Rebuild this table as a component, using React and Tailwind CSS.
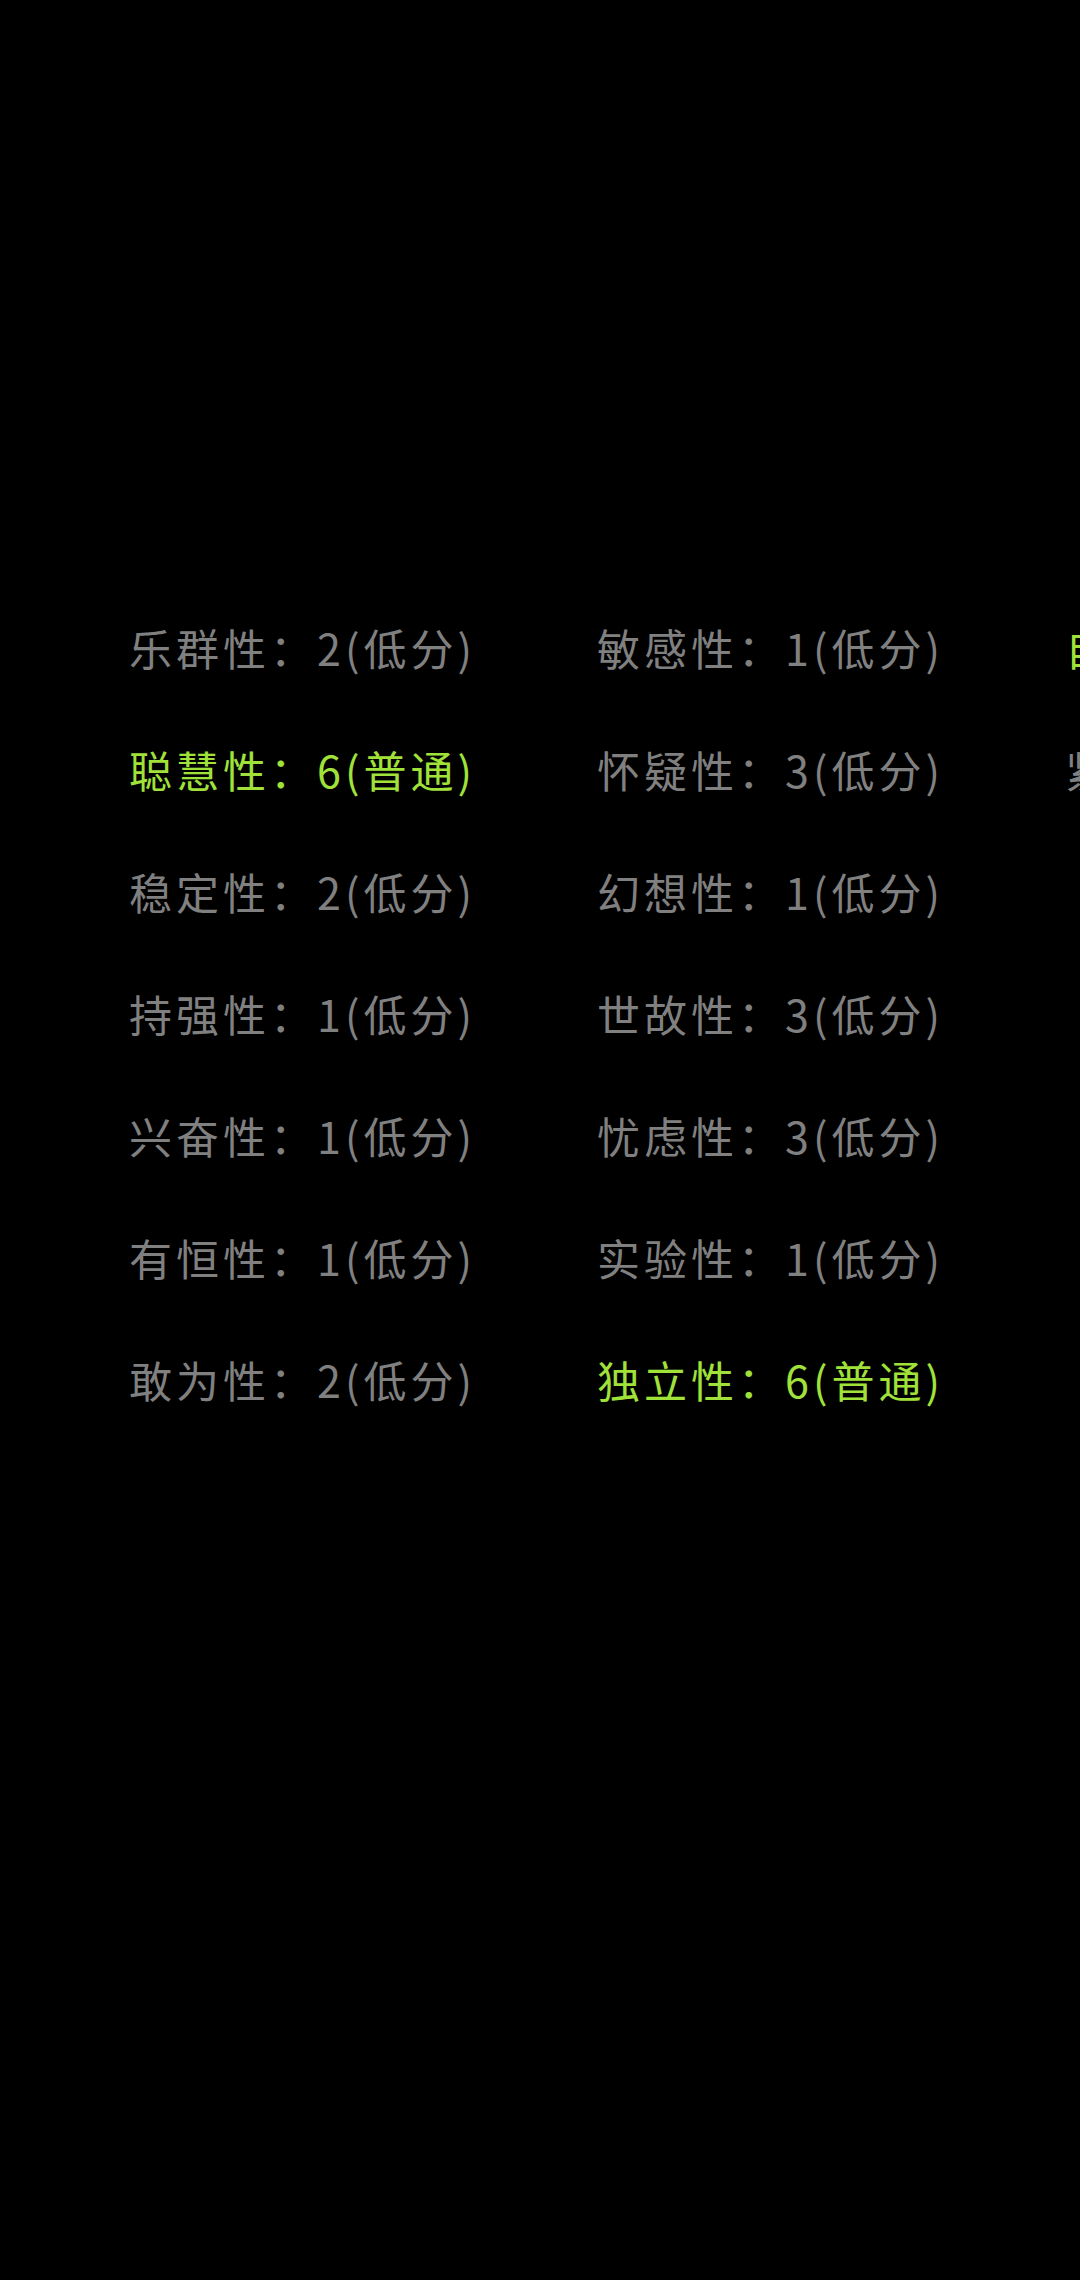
import React from "react";

const columns = [
  [
    { label: "乐群性", score: 2, level: "低分" },
    { label: "聪慧性", score: 6, level: "普通" },
    { label: "稳定性", score: 2, level: "低分" },
    { label: "持强性", score: 1, level: "低分" },
    { label: "兴奋性", score: 1, level: "低分" },
    { label: "有恒性", score: 1, level: "低分" },
    { label: "敢为性", score: 2, level: "低分" },
  ],
  [
    { label: "敏感性", score: 1, level: "低分" },
    { label: "怀疑性", score: 3, level: "低分" },
    { label: "幻想性", score: 1, level: "低分" },
    { label: "世故性", score: 3, level: "低分" },
    { label: "忧虑性", score: 3, level: "低分" },
    { label: "实验性", score: 1, level: "低分" },
    { label: "独立性", score: 6, level: "普通" },
  ],
  [
    { label: "自律性", score: 6, level: "普通" },
    { label: "紧张性", score: 3, level: "低分" },
  ],
];

function Row({ item }) {
  const normal = item.level === "普通";
  return (
    <div
      className={
        normal
          ? "h-[122px] leading-[122px] whitespace-nowrap text-[#a0e23a]"
          : "h-[122px] leading-[122px] whitespace-nowrap text-[#808080]"
      }
    >
      {item.label}：{item.score}({item.level})
    </div>
  );
}

export default function App() {
  return (
    <div
      className="min-h-[2280px] w-[1080px] overflow-hidden bg-black text-[43px] tracking-[4px]"
      style={{ fontFamily: '"Noto Sans CJK SC", "Noto Sans", sans-serif' }}
    >
      <div className="flex pl-[129px] pt-[586px]">
        {columns.map((col, i) => (
          <div key={i} className="w-[468px] shrink-0 flex flex-col">
            {col.map((item) => (
              <Row key={item.label} item={item} />
            ))}
          </div>
        ))}
      </div>
    </div>
  );
}
